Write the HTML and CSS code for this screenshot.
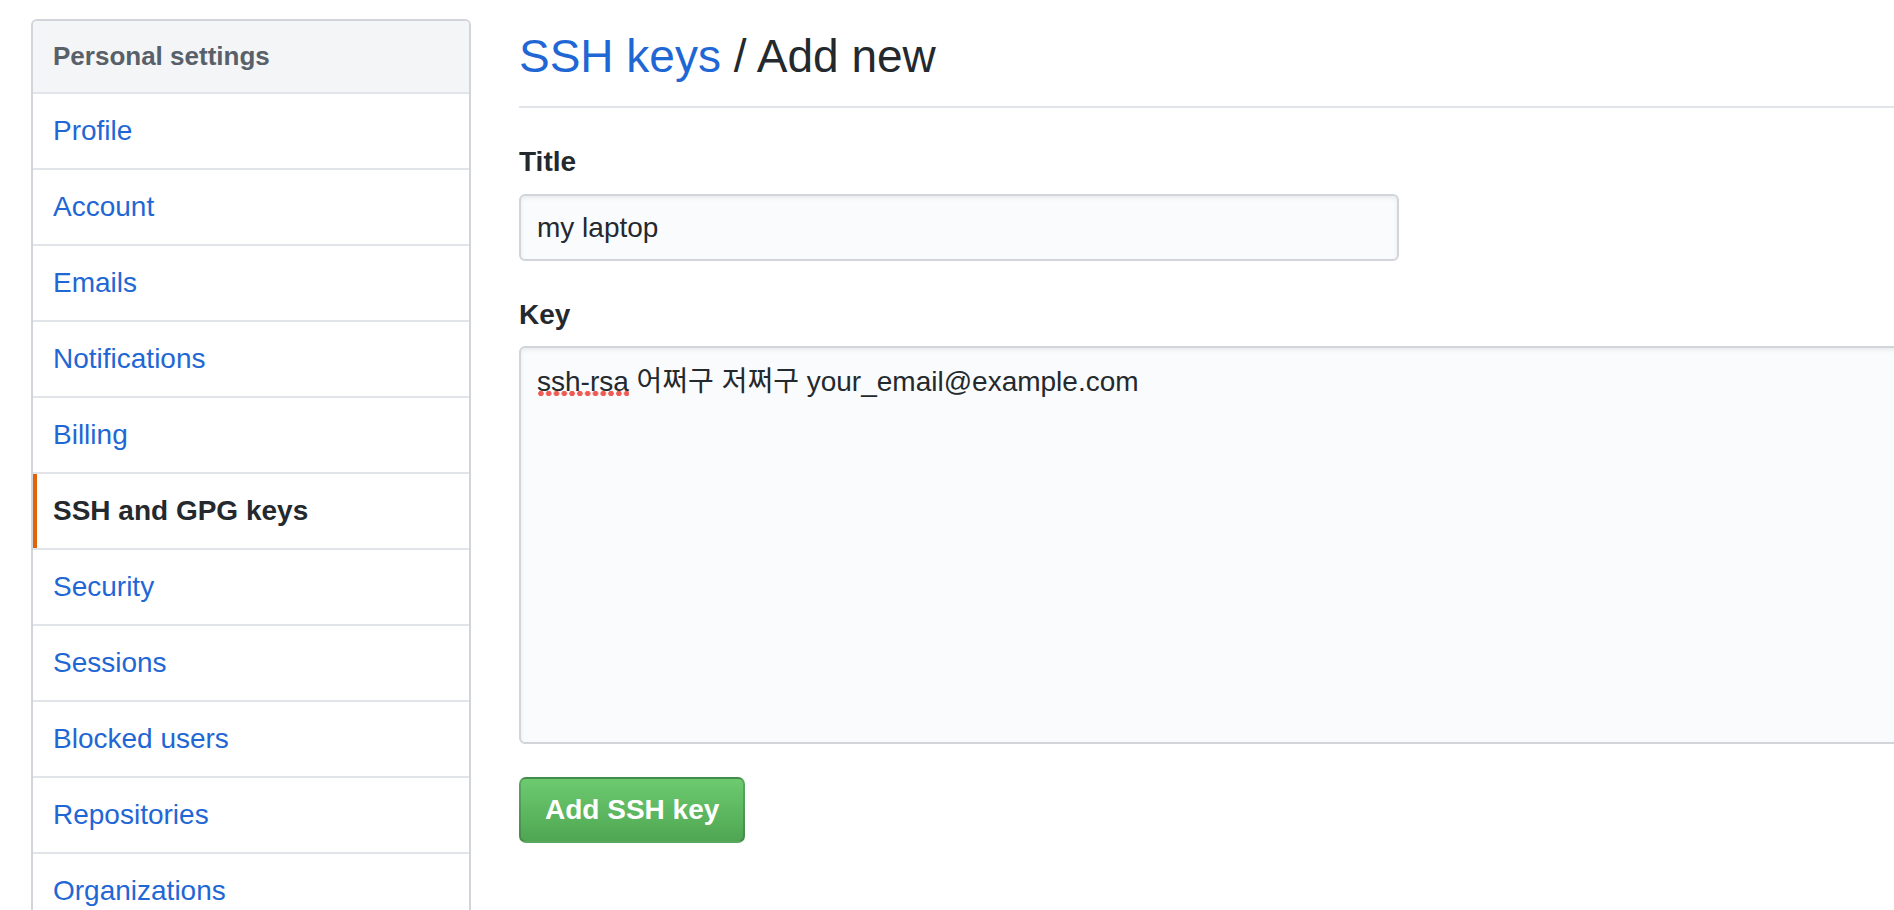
FILE: index.html
```html
<!DOCTYPE html>
<html lang="ko">
<head>
<meta charset="utf-8">
<title>SSH keys / Add new</title>
<link rel="stylesheet" href="styles.css">
</head>
<body>
<div class="page">
  <nav class="sidebar">
    <div class="menu-heading">Personal settings</div>
    <a class="menu-item" href="#">Profile</a>
    <a class="menu-item" href="#">Account</a>
    <a class="menu-item" href="#">Emails</a>
    <a class="menu-item" href="#">Notifications</a>
    <a class="menu-item" href="#">Billing</a>
    <a class="menu-item selected" href="#">SSH and GPG keys</a>
    <a class="menu-item" href="#">Security</a>
    <a class="menu-item" href="#">Sessions</a>
    <a class="menu-item" href="#">Blocked users</a>
    <a class="menu-item" href="#">Repositories</a>
    <a class="menu-item" href="#">Organizations</a>
  </nav>
  <main class="main">
    <div class="subhead">
      <h2 class="subhead-heading"><a class="crumb" href="#">SSH keys</a> / Add new</h2>
    </div>
    <form class="form">
      <div class="form-group">
        <label class="label" for="title">Title</label>
        <input class="input" id="title" type="text" value="my laptop">
      </div>
      <div class="form-group">
        <label class="label">Key</label>
        <div class="textarea" role="textbox" aria-multiline="true"><span class="misspelled">ssh-rsa</span> 어쩌구 저쩌구 your_email@example.com</div>
      </div>
      <button class="btn-primary" type="button">Add SSH key</button>
    </form>
  </main>
</div>
</body>
</html>
```
FILE: styles.css
```css
html, body {
  margin: 0;
  padding: 0;
  background: #ffffff;
  overflow: hidden;
}

body {
  font-family: "Liberation Sans", "Noto Sans CJK KR", sans-serif;
  color: #24292e;
}

.page {
  display: flex;
  align-items: flex-start;
  gap: 48px;
  padding: 19px 0 0 31px;
}

.sidebar {
  flex: 0 0 440px;
  box-sizing: border-box;
  border: 2px solid #d1d5da;
  border-bottom: none;
  border-radius: 6px 6px 0 0;
  display: flex;
  flex-direction: column;
}

.menu-heading {
  background: #f4f5f7;
  padding: 16px 20px;
  font-size: 26px;
  line-height: 39px;
  font-weight: bold;
  color: #586069;
  border-bottom: 2px solid #e1e4e8;
  border-radius: 4px 4px 0 0;
}

.menu-item {
  display: block;
  padding: 16px 20px;
  font-size: 28px;
  line-height: 42px;
  color: #1f67d4;
  text-decoration: none;
  border-bottom: 2px solid #e1e4e8;
}

.menu-item.selected {
  color: #24292e;
  font-weight: bold;
  box-shadow: inset 4px 0 0 #e36209;
}

.main {
  flex: 1 1 auto;
  min-width: 0;
}

.subhead {
  margin-top: 7px;
  padding-bottom: 20px;
  border-bottom: 2px solid #e1e4e8;
}

.subhead-heading {
  margin: 0;
  font-size: 46px;
  line-height: 60px;
  font-weight: normal;
  color: #24292e;
  white-space: nowrap;
}

.crumb {
  color: #1f67d4;
  text-decoration: none;
}

.form {
  display: flex;
  flex-direction: column;
  align-items: flex-start;
}

.form-group {
  margin-top: 33px;
  display: flex;
  flex-direction: column;
}

.label {
  font-size: 28px;
  line-height: 42px;
  font-weight: bold;
  color: #24292e;
  margin-bottom: 10px;
}

.input {
  box-sizing: border-box;
  width: 880px;
  height: 67px;
  margin: 1px 0 0 0;
  padding: 0 16px;
  font-family: "Liberation Sans", "Noto Sans CJK KR", sans-serif;
  font-size: 28px;
  color: #24292e;
  background: #fafbfc;
  border: 2px solid #d1d5da;
  border-radius: 6px;
  box-shadow: inset 0 2px 4px rgba(27, 31, 35, 0.075);
  outline: none;
}

.textarea {
  box-sizing: border-box;
  width: 1500px;
  height: 398px;
  padding: 14px 16px;
  font-size: 28px;
  line-height: 40px;
  color: #24292e;
  background: #fafbfc;
  border: 2px solid #d1d5da;
  border-radius: 6px;
  box-shadow: inset 0 2px 4px rgba(27, 31, 35, 0.075);
  white-space: pre-wrap;
}

.misspelled {
  background-image: radial-gradient(circle at 50% 50%, #ef5b52 2.4px, rgba(239, 91, 82, 0) 3px);
  background-size: 7.8px 7px;
  background-repeat: repeat-x;
  background-position: 0 24px;
}

.btn-primary {
  margin-top: 33px;
  box-sizing: border-box;
  height: 66px;
  padding: 0 24px;
  font-family: "Liberation Sans", sans-serif;
  font-size: 28px;
  font-weight: bold;
  color: #ffffff;
  background-image: linear-gradient(180deg, #6dca6f 0%, #4fa653 100%);
  border: 2px solid rgba(27, 31, 35, 0.2);
  border-radius: 7px;
  cursor: pointer;
}
```
